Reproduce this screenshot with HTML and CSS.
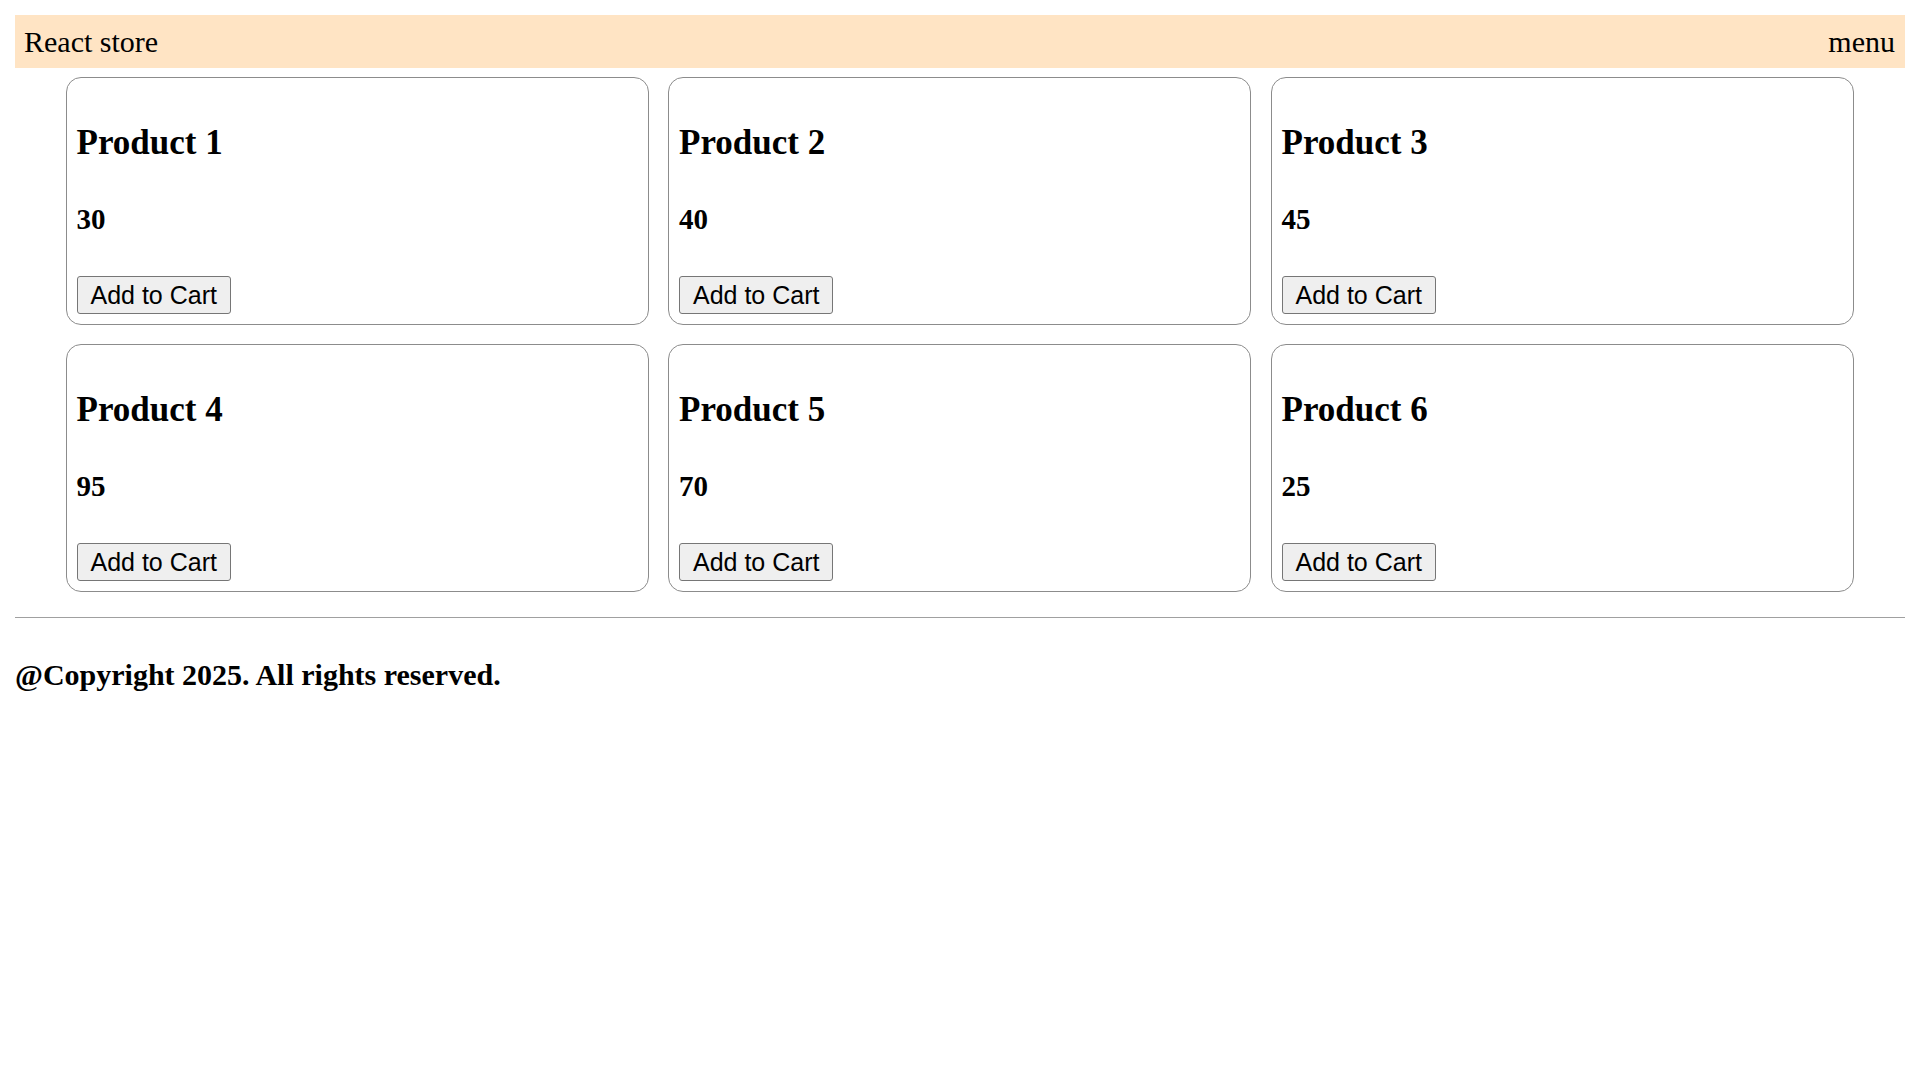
FILE: index.html
```html
<!DOCTYPE html>
<html lang="en">
<head>
<meta charset="utf-8">
<title>React store</title>
<link rel="stylesheet" href="styles.css">
</head>
<body>
<div class="app">
  <header class="topbar">
    <span class="brand">React store</span>
    <span class="menu">menu</span>
  </header>
  <main class="products">
    <div class="card"><h2 class="card-title">Product 1</h2><h3 class="card-price">30</h3><button class="btn">Add to Cart</button></div>
    <div class="card"><h2 class="card-title">Product 2</h2><h3 class="card-price">40</h3><button class="btn">Add to Cart</button></div>
    <div class="card"><h2 class="card-title">Product 3</h2><h3 class="card-price">45</h3><button class="btn">Add to Cart</button></div>
    <div class="card"><h2 class="card-title">Product 4</h2><h3 class="card-price">95</h3><button class="btn">Add to Cart</button></div>
    <div class="card"><h2 class="card-title">Product 5</h2><h3 class="card-price">70</h3><button class="btn">Add to Cart</button></div>
    <div class="card"><h2 class="card-title">Product 6</h2><h3 class="card-price">25</h3><button class="btn">Add to Cart</button></div>
  </main>
  <footer class="footer">
    <hr class="divider">
    <h3 class="copyright">@Copyright 2025. All rights reserved.</h3>
  </footer>
</div>
</body>
</html>
```
FILE: styles.css
```css
html, body {
  margin: 0;
  padding: 0;
  background: #ffffff;
}

body {
  font-family: "Liberation Serif", "Times New Roman", serif;
  color: #000000;
}

.app {
  padding: 15px;
}

.topbar {
  height: 53px;
  background: #ffe4c4;
  display: flex;
  justify-content: space-between;
  align-items: center;
  padding: 0 10px 0 9px;
  font-size: 30px;
}

.products {
  margin-top: 9px;
  display: grid;
  grid-template-columns: repeat(3, 583px);
  column-gap: 19.5px;
  row-gap: 19px;
  justify-content: center;
  padding-right: 1px;
}

.card {
  border: 1px solid #8c8c8c;
  border-radius: 15px;
  padding: 12px 10px 10px;
  display: flex;
  flex-direction: column;
  align-items: flex-start;
}

.card-title {
  margin: 32px 0 0;
  font-size: 35px;
  line-height: 42px;
  font-weight: bold;
}

.card-price {
  margin: 39px 0 0;
  font-size: 29px;
  line-height: 32px;
  font-weight: bold;
}

.btn {
  margin-top: 41px;
  font-family: "Liberation Sans", Arial, sans-serif;
  font-size: 25px;
  line-height: 28px;
  padding: 4px 13px;
  background: #efefef;
  color: #000000;
  border: 1px solid #767676;
  border-radius: 3px;
}

.divider {
  margin: 25px 0 0;
  border: 0;
  border-top: 1px solid #a0a0a0;
  height: 0;
}

.copyright {
  margin: 40px 0 0;
  font-size: 30px;
  line-height: normal;
  font-weight: bold;
}
```
